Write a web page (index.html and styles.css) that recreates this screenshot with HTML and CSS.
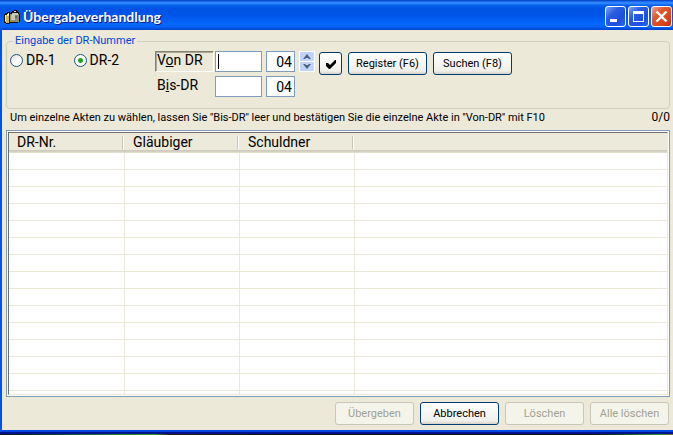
FILE: index.html
```html
<!doctype html>
<html lang="de">
<head>
    <meta charset="UTF-8">
    <meta name="viewport" content="width=device-width, initial-scale=1.0">
    <title>Übergabeverhandlung</title>
    <link rel="stylesheet" href="styles.css">
</head>
<body>
<div class="window">
    <header class="titlebar">
        <svg class="app-icon" width="16" height="16" viewBox="0 0 16 16" shape-rendering="crispEdges">
            <path d="M0 5h1V4h2V3h3v1h1V3h1V2h2V1h3v1h1v1h1v2h1v8h-2v1H6v1H2v-1H0z" fill="#101010"/>
            <path d="M1 6h4v8H2v-1H1z" fill="#c8b848"/>
            <path d="M1 6h1v6H1zM3 5h2v2H3z" fill="#f8f0b0"/>
            <path d="M6 5h9v8H6z" fill="#8c8c80"/>
            <path d="M8 4h6v2H8zM7 6h4v5H7z" fill="#c8c8b8"/>
            <path d="M10 2h2v1h-2zM4 4h1v1H4z" fill="#e8e8d8"/>
            <path d="M11 7h2v2h-2z" fill="#686860"/>
            <path d="M13 10h2v3h-2zM6 12h4v1H6z" fill="#a09428"/>
        </svg>
        <h1>Übergabeverhandlung</h1>
        <div class="controls">
            <button type="button" class="ctl" aria-label="Minimieren">
                <svg width="19" height="19" viewBox="0 0 19 19"><path d="M4 12h7v3H4z" fill="#fff"/></svg>
            </button>
            <button type="button" class="ctl" aria-label="Maximieren">
                <svg width="19" height="19" viewBox="0 0 19 19"><path d="M4 4h11v11H4zM5 7v7h9V7z" fill="#fff" fill-rule="evenodd"/></svg>
            </button>
            <button type="button" class="ctl close" aria-label="Schließen">
                <svg width="19" height="19" viewBox="0 0 19 19"><path d="M4.500 4.500l10 10M14.500 4.500l-10 10" stroke="#fff" stroke-width="2.400"/></svg>
            </button>
        </div>
    </header>

    <main>
        <fieldset>
            <legend>Eingabe der DR-Nummer</legend>
            <div class="radios">
                <label><input type="radio" name="dr">DR-1</label>
                <label><input type="radio" name="dr" checked>DR-2</label>
            </div>
            <div class="range">
                <label class="active" for="von"><span>V<u>o</u>n DR</span></label>
                <input type="text" id="von" class="caret">
                <input type="text" class="year" value="04" aria-label="Von Jahr">
                <label for="bis"><span>B<u>i</u>s-DR</span></label>
                <input type="text" id="bis">
                <input type="text" class="year" value="04" aria-label="Bis Jahr">
            </div>
            <div class="spin">
                <button type="button" aria-label="Jahr erhöhen">
                    <svg width="8" height="5" viewBox="0 0 8 5"><path d="M0 5l4-5 4 5H6L4 3 2 5z" fill="#4d6185"/><path d="M2 4l2-2 2 2z" fill="#4d6185"/></svg>
                </button>
                <button type="button" aria-label="Jahr verringern">
                    <svg width="8" height="5" viewBox="0 0 8 5"><path d="M0 0l4 5 4-5H6L4 2 2 0z" fill="#4d6185"/><path d="M2 1l2 2 2-2z" fill="#4d6185"/></svg>
                </button>
            </div>
            <div class="actions">
                <button type="button" class="btn check" aria-label="Bestätigen">
                    <svg width="12" height="12" viewBox="0 0 12 12"><path d="M1 5h2l2 2 5-5h1v3l-6 6H4L1 8z"/></svg>
                </button>
                <button type="button" class="btn">Register (F6)</button>
                <button type="button" class="btn">Suchen (F8)</button>
            </div>
        </fieldset>

        <div class="hint">
            <span>Um einzelne Akten zu wählen, lassen Sie ''Bis-DR'' leer und bestätigen Sie die einzelne Akte in ''Von-DR'' mit F10</span>
            <span class="count">0/0</span>
        </div>

        <div class="list">
            <div class="list-view">
                <table>
                    <colgroup>
                        <col class="first">
                        <col class="name">
                        <col class="name">
                        <col>
                    </colgroup>
                    <thead>
                        <tr><th>DR-Nr.</th><th>Gläubiger</th><th>Schuldner</th><th></th></tr>
                    </thead>
                    <tbody>
                        <tr><td></td><td></td><td></td><td></td></tr>
                        <tr><td></td><td></td><td></td><td></td></tr>
                        <tr><td></td><td></td><td></td><td></td></tr>
                        <tr><td></td><td></td><td></td><td></td></tr>
                        <tr><td></td><td></td><td></td><td></td></tr>
                        <tr><td></td><td></td><td></td><td></td></tr>
                        <tr><td></td><td></td><td></td><td></td></tr>
                        <tr><td></td><td></td><td></td><td></td></tr>
                        <tr><td></td><td></td><td></td><td></td></tr>
                        <tr><td></td><td></td><td></td><td></td></tr>
                        <tr><td></td><td></td><td></td><td></td></tr>
                        <tr><td></td><td></td><td></td><td></td></tr>
                        <tr><td></td><td></td><td></td><td></td></tr>
                        <tr><td></td><td></td><td></td><td></td></tr>
                        <tr><td></td><td></td><td></td><td></td></tr>
                    </tbody>
                </table>
            </div>
        </div>

        <footer>
            <button type="button" class="btn" disabled>Übergeben</button>
            <button type="button" class="btn default">Abbrechen</button>
            <button type="button" class="btn" disabled>Löschen</button>
            <button type="button" class="btn" disabled>Alle löschen</button>
        </footer>
    </main>
</div>
</body>
</html>
```
FILE: styles.css
```css
*
{
    box-sizing: border-box;
}

body
{
    margin: 0;
    font-family: Roboto, "Liberation Sans", Arial, sans-serif;
    font-size: 11px;
    color: #000;
    /* strip of desktop below the window */
    background: linear-gradient(90deg, #0a1020, #0c5048 10%, #1a8c2c 18%, #28a030 23%, #3a2010 25%, #101018 40%, #101018 88%, #186020 94%, #28a030 98%, #806050);
}

button, input
{
    font-family: inherit;
    font-size: inherit;
    margin: 0;
    padding: 0;
}

.window
{
    display: flex;
    flex-direction: column;
    height: calc(100vh - 1px);
    border-left: 2px solid #0054e3;
    background-color: #ece9d8;
}

.window::after
{
    content: "";
    height: 4px;
    margin-left: -2px;
    background: linear-gradient(#0046e0 2px, #00138c 2px);
}

/* title bar */

.titlebar
{
    display: flex;
    align-items: center;
    height: 30px;
    margin-left: -2px;
    padding: 3px 1px 0 4px;
    background: linear-gradient(#0c3a9c 0, #0c5cf0 1px, #3a90ff 3px, #0a64ee 5px, #0054e3 8px, #0055e8 15px, #0468ff 24px, #0462fa 27px, #0040c8 30px);
}

.app-icon
{
    flex: none;
}

h1
{
    flex: 1;
    margin: 0 0 0 3px;
    font-family: Lato, "Open Sans", sans-serif;
    font-size: 14px;
    line-height: 20px;
    font-weight: bold;
    color: #fff;
    text-shadow: 1px 1px 0 #0a1883;
}

.controls
{
    display: flex;
    gap: 2px;
}

.ctl
{
    width: 21px;
    height: 21px;
    border: 1px solid #fff;
    border-radius: 3px;
    background: linear-gradient(135deg, #7ca4f8, #2a5ce0 35%, #1c50dc 70%, #2868f0);
}

.ctl svg, .btn svg, .spin svg
{
    display: block;
    margin: auto;
}

.close
{
    background: linear-gradient(135deg, #f0a088, #e05830 35%, #d8441c 75%, #b83408);
}

main
{
    flex: 1;
    display: flex;
    flex-direction: column;
    min-height: 0;
    padding: 4px 3px 5px 4px;
}

/* number entry */

fieldset
{
    display: flex;
    align-items: flex-start;
    height: 75px;
    margin: 0;
    padding: 3px 0 0 3px;
    border: 1px solid #d0d0bf;
    border-radius: 4px;
}

legend
{
    margin-left: 3px;
    padding: 0 2px;
    line-height: 14px;
    color: #0046d5;
}

.radios
{
    display: flex;
    gap: 18px;
    width: 145px;
    padding-top: 1px;
    font-size: 14px;
    line-height: 16px;
}

.radios label
{
    display: flex;
    align-items: center;
    gap: 3px;
}

.radios input
{
    appearance: none;
    width: 13px;
    height: 13px;
    border: 1px solid #1c5180;
    border-radius: 50%;
    background: linear-gradient(135deg, #dcdcd7, #fff 60%);
}

.radios input:checked
{
    background: radial-gradient(circle, #21a121 2px, #fff 3px);
}

.range
{
    display: grid;
    grid-template-columns: 56px 47px 29px;
    grid-auto-rows: 21px;
    gap: 4px;
    font-size: 14px;
}

.range label
{
    margin-right: -3px;
    padding-left: 1px;
    line-height: 17px;
    border: 1px solid transparent;
}

.range .active
{
    border-color: #848270 #fff #fff #848270;
    box-shadow: inset 1px 1px 0 #aca899;
}

.range input
{
    width: 100%;
    height: 21px;
    padding: 0 2px;
    border: 1px solid #7f9db9;
    background-color: #fff;
    outline: none;
}

/* text cursor of the focused field */
.range .caret
{
    background: linear-gradient(#000, #000) 2px 2px / 1px 15px no-repeat #fff;
}

.range .year
{
    text-align: right;
}

.spin
{
    display: flex;
    flex-direction: column;
    gap: 1px;
    margin-left: 4px;
    padding: 1px;
    background-color: #fff;
}

.spin button
{
    width: 14px;
    height: 9px;
    border: 0;
    border-radius: 1px;
    background-color: #c2d4fc;
}

.actions
{
    display: flex;
    gap: 6px;
    margin: 1px 0 0 4px;
}

.btn
{
    width: 79px;
    height: 23px;
    border: 1px solid #003c74;
    border-radius: 3px;
    color: #000;
    background: linear-gradient(#fff, #f0f0ea 85%, #d6d0c5);
}

.check
{
    width: 23px;
}

.btn:disabled
{
    border-color: #c9c7ba;
    color: #a1a192;
    background: #f5f4ea;
}

.hint
{
    display: flex;
    justify-content: space-between;
    padding-left: 4px;
    line-height: 17px;
}

.count
{
    font-size: 12px;
}

/* list of files */

.list
{
    flex: 1;
    min-height: 0;
    margin-top: 4px;
    padding: 1px;
    border: 1px solid #7f9db9;
    background-color: #fff;
}

.list-view
{
    height: 100%;
    overflow: hidden;
    border: 1px solid #ece9d8;
    border-top-color: #716f64;
    border-left-color: #716f64;
}

table
{
    width: 100%;
    table-layout: fixed;
    border-spacing: 0;
}

.first
{
    width: 116px;
}

.name
{
    width: 115px;
}

th
{
    height: 20px;
    padding: 0 0 0 8px;
    font-size: 14px;
    line-height: 17px;
    font-weight: normal;
    text-align: left;
    border-bottom: 1px solid #e2decd;
    background: linear-gradient(90deg, #c7c5b2 1px, #fff 1px) right 1px top 3px / 2px 13px no-repeat,
                linear-gradient(#cbc7b8, #d8d4c5) bottom / 100% 2px no-repeat #ebeadb;
}

th:last-child
{
    background: linear-gradient(#cbc7b8, #d8d4c5) bottom / 100% 2px no-repeat #ebeadb;
}

td
{
    height: 17px;
    padding: 0;
    border-right: 1px solid #ece9d8;
    border-bottom: 1px solid #ece9d8;
}

td:last-child
{
    border-right: 0;
}

footer
{
    display: flex;
    justify-content: flex-end;
    gap: 6px;
    padding: 5px 1px 0 0;
}
```
